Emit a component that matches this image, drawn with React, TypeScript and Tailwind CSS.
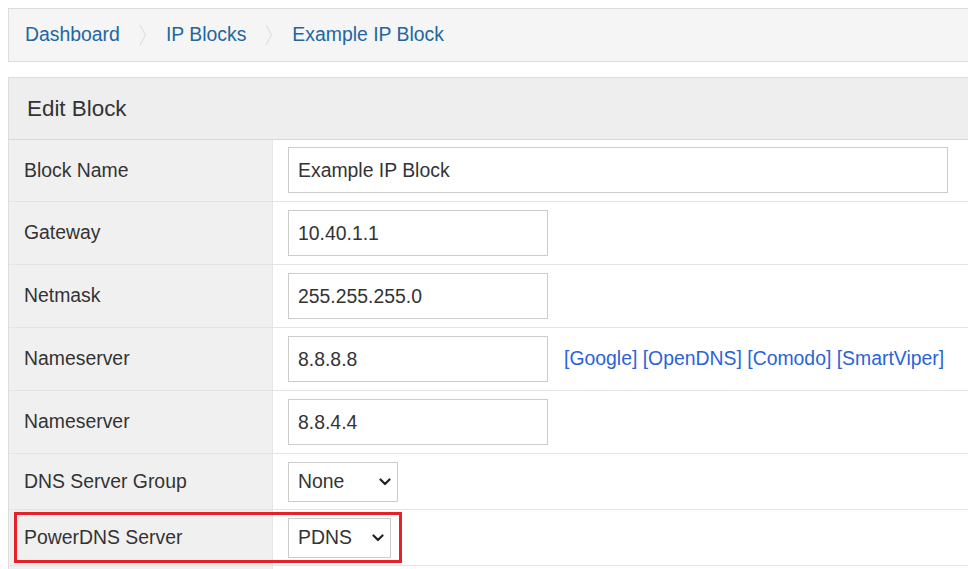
import React from "react";

const font = { fontFamily: '"Liberation Sans", Arial, sans-serif' };

function Chevron() {
  return (
    <svg width="12" height="8" viewBox="0 0 12 8" className="pointer-events-none absolute right-[6px] top-1/2 -translate-y-1/2">
      <polyline points="1.5,1.5 6,6 10.5,1.5" fill="none" stroke="#222" strokeWidth="2.2" strokeLinecap="round" strokeLinejoin="round" />
    </svg>
  );
}

function Sep() {
  return (
    <svg width="8" height="22" viewBox="0 0 8 22" className="mx-[19px]">
      <polyline points="1,1 6.5,11 1,21" fill="none" stroke="#dddddd" strokeWidth="1.1" />
    </svg>
  );
}

function Row({ label, children, first, tall = true }: { label: string; children: React.ReactNode; first?: boolean; tall?: boolean }) {
  return (
    <div className={`flex ${first ? "" : "border-t border-[#e4e4e4]"}`}>
      <div className="w-[264px] shrink-0 bg-[#f0f0f0] border-r border-[#e6e6e6] flex items-center pl-[15px] text-[19.4px] text-[#333]">
        {label}
      </div>
      <div className={`flex-1 bg-white flex items-center pl-[15px] ${first ? "pt-[7px] pb-2" : tall ? "py-2" : "pt-2 pb-[7px]"}`}>{children}</div>
    </div>
  );
}

function TextInput({ value, w }: { value: string; w: string }) {
  return (
    <input
      readOnly
      value={value}
      className={`${w} h-[46px] border border-[#cccccc] bg-white px-[9px] text-[19.4px] text-[#333] outline-none`}
      style={font}
    />
  );
}

function Select({ value, w }: { value: string; w: string }) {
  return (
    <div className={`relative ${w} h-[40px] border border-[#cccccc] bg-white flex items-center pl-[9px] text-[19.4px] text-[#333]`}>
      {value}
      <Chevron />
    </div>
  );
}

export default function App() {
  return (
    <div className="w-[968px] h-[569px] overflow-hidden bg-white" style={font}>
      <div className="ml-2 mt-2 w-[990px]">
        <div className="h-[54px] border border-[#dddddd] bg-[#f5f5f5] flex items-center pl-[16px] text-[19.4px] text-[#23669f]">
          <span>Dashboard</span>
          <Sep />
          <span>IP Blocks</span>
          <Sep />
          <span>Example IP Block</span>
        </div>

        <div className="mt-[15px] border-l border-t border-[#dddddd]">
          <div className="h-[62px] bg-[#eeeeee] border-b border-[#d9d9d9] flex items-center pl-[18px] text-[22.4px] text-[#333]">
            Edit Block
          </div>
          <Row label="Block Name" first>
            <TextInput value="Example IP Block" w="w-[660px]" />
          </Row>
          <Row label="Gateway">
            <TextInput value="10.40.1.1" w="w-[260px]" />
          </Row>
          <Row label="Netmask">
            <TextInput value="255.255.255.0" w="w-[260px]" />
          </Row>
          <Row label="Nameserver">
            <TextInput value="8.8.8.8" w="w-[260px]" />
            <div className="ml-4 text-[19.4px] text-[#2b63d6]">
              <span>[Google]</span> <span>[OpenDNS]</span> <span>[Comodo]</span> <span>[SmartViper]</span>
            </div>
          </Row>
          <Row label="Nameserver">
            <TextInput value="8.8.4.4" w="w-[260px]" />
          </Row>
          <Row label="DNS Server Group" tall={false}>
            <Select value="None" w="w-[110px]" />
          </Row>
          <div className="relative">
            <Row label="PowerDNS Server" tall={false}>
              <Select value="PDNS" w="w-[103px]" />
            </Row>
            <div className="absolute left-[5px] top-[3px] w-[388px] h-[51px] border-[3px] border-[#e5222b] pointer-events-none" />
          </div>
          <div className="border-t border-[#e4e4e4] flex h-[20px]">
            <div className="w-[264px] bg-[#f0f0f0] border-r border-[#e6e6e6]" />
            <div className="flex-1 bg-white" />
          </div>
        </div>
      </div>
    </div>
  );
}
